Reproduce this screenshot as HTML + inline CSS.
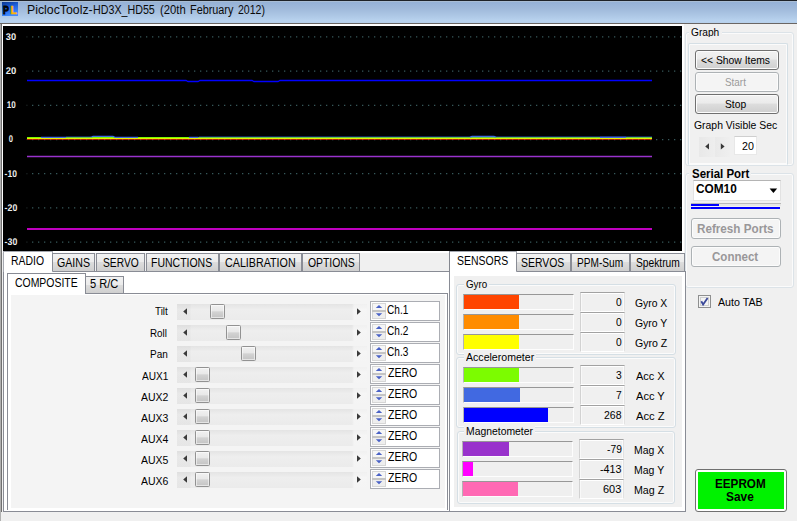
<!DOCTYPE html>
<html><head><meta charset="utf-8"><title>PiclocToolz-HD3X_HD55</title>
<style>
*{box-sizing:border-box;margin:0;padding:0}
html,body{width:797px;height:521px;overflow:hidden;background:#f0f0f0}
body{position:relative;font-family:"Liberation Sans",sans-serif;font-size:11px;color:#000;line-height:1}
.a{position:absolute}
.t{position:absolute;white-space:nowrap;line-height:14px;height:14px;transform-origin:0 0;display:block}
.btn{position:absolute;border:1px solid #707070;border-radius:3px;background:linear-gradient(#f2f2f2 0%,#ebebeb 45%,#dddddd 50%,#cfcfcf 100%);box-shadow:inset 0 0 0 1px #fcfcfc}
.btn.dis{border-color:#adb2b5;background:#f4f4f4}
.tab{position:absolute;border:1px solid #898c95;border-bottom:none;background:linear-gradient(#f2f2f2 0%,#ebebeb 50%,#dddddd 50%,#cfcfcf 100%)}
.tab.sel{background:#fff;border-color:#a5a8b0}
.trk{position:absolute;height:16px;background:linear-gradient(90deg,rgba(0,0,0,.025) 0,rgba(0,0,0,.025) 13px,rgba(0,0,0,0) 14px,rgba(255,255,255,0) 175px,rgba(255,255,255,.45) 177px),linear-gradient(#e4e4e4,#eeeeee 35%,#ebebeb)}
.thumb{position:absolute;width:15px;height:15px;border:1px solid #929292;border-radius:1.5px;background:linear-gradient(#f1f1f1 0%,#e8e8e8 46%,#d3d3d3 52%,#c4c4c4 100%);box-shadow:inset 0 0 0 1px rgba(255,255,255,.55)}
.box{position:absolute;border:1px solid #abadb3;background:#fff}
.val{position:absolute;width:45px;height:20px;border:1px solid #e2e2e2;border-top-color:#a2a2a2;border-left-color:#d2d2d2;border-bottom-color:#fff;background:#f0f0f0;box-shadow:inset 0 1px 0 #fff,inset 1px 0 0 #f8f8f8,inset -1px 0 0 #fafafa}
.gb{position:absolute;border:1px solid #d5dfe5;border-radius:3px;box-shadow:inset 0 0 0 1px #fbfbfb}
.bar{position:absolute;height:16px;border-top:1px solid #979797;border-left:1px solid #b4b4b4;border-bottom:1px solid #fdfdfd;border-right:1px solid #fdfdfd;background:#efefef}
.fill{position:absolute;left:0;top:0;height:14px}
</style></head><body>

<div class="a" style="left:0;top:0;width:797px;height:23px;background:linear-gradient(#a9bdd5 0,#a9bdd5 1px,#96b2d7 1.5px,#a0badb 8px,#aec8e6 15px,#b9d3ef 20px,#b6cfea 22px);border-top:1px solid #1e2228"></div>
<div class="a" style="left:0;top:23px;width:797px;height:1px;background:#6a6664"></div>
<svg class="a" style="left:2px;top:2px" width="16" height="14" viewBox="0 0 16 14"><defs><linearGradient id="ig" x1="0" y1="0" x2="0.35" y2="1"><stop offset="0" stop-color="#0a3590"/><stop offset="0.45" stop-color="#1b5fd8"/><stop offset="1" stop-color="#3f8aff"/></linearGradient></defs><rect width="16" height="14" fill="url(#ig)"/><text x="0" y="11.8" transform="translate(1.1 0) scale(0.84 1)" font-family="Liberation Sans,sans-serif" font-weight="bold" font-size="10.5" fill="#050505" stroke="#050505" stroke-width="0.8">P</text><text x="8.4" y="11.8" font-family="Liberation Sans,sans-serif" font-weight="bold" font-size="10.5" fill="#ffb400" stroke="#ffb400" stroke-width="0.5">L</text></svg>
<span class="t" style="left:26.60px;top:3.44px;font-size:12.3px;transform:scaleX(1.0013);color:#0a0a0a;">PiclocToolz-</span>
<span class="t" style="left:93.40px;top:3.44px;font-size:12.3px;transform:scaleX(0.8691);color:#0a0a0a;">HD3X_HD55</span>
<span class="t" style="left:160.30px;top:3.44px;font-size:12.3px;transform:scaleX(0.9172);color:#0a0a0a;">(20th</span>
<span class="t" style="left:190.10px;top:3.44px;font-size:12.3px;transform:scaleX(0.8821);color:#0a0a0a;">February</span>
<span class="t" style="left:238.20px;top:3.44px;font-size:12.3px;transform:scaleX(0.8555);color:#0a0a0a;">2012)</span>
<div class="a" style="left:0;top:24px;width:797px;height:497px;background:#f0f0f0"></div>
<div class="a" style="left:0;top:24px;width:1px;height:497px;background:#b0b0b0"></div>
<div class="a" style="left:1px;top:24px;width:1px;height:488px;background:#707070"></div>
<div class="a" style="left:2px;top:24px;width:682px;height:229px;background:#fff"></div>
<svg class="a" style="left:3px;top:26px" width="679" height="225" viewBox="3 26 679 225">
<rect x="3" y="26" width="679" height="225" fill="#000"/>
<line x1="32" y1="36.9" x2="682" y2="36.9" stroke="#37585a" stroke-width="1.25" stroke-dasharray="1.3 4.7"/>
<rect x="26.3" y="36.3" width="1.2" height="1.2" fill="#1e2626"/>
<line x1="32" y1="71.1" x2="682" y2="71.1" stroke="#37585a" stroke-width="1.25" stroke-dasharray="1.3 4.7"/>
<rect x="26.3" y="70.5" width="1.2" height="1.2" fill="#1e2626"/>
<line x1="32" y1="105.3" x2="682" y2="105.3" stroke="#37585a" stroke-width="1.25" stroke-dasharray="1.3 4.7"/>
<rect x="26.3" y="104.7" width="1.2" height="1.2" fill="#1e2626"/>
<line x1="32" y1="139.5" x2="682" y2="139.5" stroke="#37585a" stroke-width="1.25" stroke-dasharray="1.3 4.7"/>
<rect x="26.3" y="138.9" width="1.2" height="1.2" fill="#1e2626"/>
<line x1="32" y1="173.7" x2="682" y2="173.7" stroke="#37585a" stroke-width="1.25" stroke-dasharray="1.3 4.7"/>
<rect x="26.3" y="173.1" width="1.2" height="1.2" fill="#1e2626"/>
<line x1="32" y1="207.9" x2="682" y2="207.9" stroke="#37585a" stroke-width="1.25" stroke-dasharray="1.3 4.7"/>
<rect x="26.3" y="207.3" width="1.2" height="1.2" fill="#1e2626"/>
<line x1="32" y1="242.1" x2="682" y2="242.1" stroke="#37585a" stroke-width="1.25" stroke-dasharray="1.3 4.7"/>
<rect x="26.3" y="241.5" width="1.2" height="1.2" fill="#1e2626"/>
<text transform="translate(5.80 39.85) scale(0.954 1)" font-family="Liberation Sans,sans-serif" text-rendering="geometricPrecision" font-weight="bold" font-size="9.7" fill="#ececec">30</text>
<text transform="translate(5.80 74.02) scale(0.973 1)" font-family="Liberation Sans,sans-serif" text-rendering="geometricPrecision" font-weight="bold" font-size="9.7" fill="#ececec">20</text>
<text transform="translate(6.80 108.19) scale(0.834 1)" font-family="Liberation Sans,sans-serif" text-rendering="geometricPrecision" font-weight="bold" font-size="9.7" fill="#ececec">10</text>
<text transform="translate(8.80 142.36) scale(0.778 1)" font-family="Liberation Sans,sans-serif" text-rendering="geometricPrecision" font-weight="bold" font-size="9.7" fill="#ececec">0</text>
<text transform="translate(4.60 176.53) scale(0.876 1)" font-family="Liberation Sans,sans-serif" text-rendering="geometricPrecision" font-weight="bold" font-size="9.7" fill="#ececec">-10</text>
<text transform="translate(4.60 210.70) scale(0.905 1)" font-family="Liberation Sans,sans-serif" text-rendering="geometricPrecision" font-weight="bold" font-size="9.7" fill="#ececec">-20</text>
<text transform="translate(4.60 244.87) scale(0.905 1)" font-family="Liberation Sans,sans-serif" text-rendering="geometricPrecision" font-weight="bold" font-size="9.7" fill="#ececec">-30</text>
<path d="M27 80.5H186l2 1h10l2-1H252l2 1h24l2-1H652" fill="none" stroke="#0000ff" stroke-width="1.3"/>
<path d="M27 139.4H652" fill="none" stroke="#e83000" stroke-width="0.8"/>
<path d="M27 138.5H652" fill="none" stroke="#e6f400" stroke-width="1"/>
<path d="M27 137.5H652" fill="none" stroke="#78fa00" stroke-width="1"/>
<path d="M66 136.95H91M199 136.95H652" fill="none" stroke="#3c62e6" stroke-width="0.7"/>
<path d="M41 137.3H66M91 137.3l2-1h20l2 1M114 137.3H138M189 137.3H198.5M470 137.3l2-1h22l2 1M600 137.3H626" fill="none" stroke="#4169e1" stroke-width="1.2"/>
<path d="M27 156.5H652" fill="none" stroke="#9932cc" stroke-width="1.4"/>
<path d="M27 229H652" fill="none" stroke="#ff00ff" stroke-width="1.3"/>
</svg>
<div class="gb" style="left:685px;top:32px;width:109px;height:134px;border-color:#dce3e8"></div>
<div class="a" style="left:689px;top:26px;width:33px;height:11px;background:#f0f0f0;overflow:hidden">
<span class="t" style="left:1.90px;top:-1.12px;font-size:11.6px;transform:scaleX(0.8751);">Graph</span>
</div>
<div class="gb" style="left:688px;top:43px;width:100px;height:122px;border-bottom-color:transparent;border-radius:2px 2px 0 0"></div>
<div class="btn " style="left:695px;top:50px;width:84px;height:20px"></div>
<span class="t" style="left:701.40px;top:52.98px;font-size:11.6px;transform:scaleX(0.8920);">&lt;&lt; Show Items</span>
<div class="btn dis" style="left:695px;top:72px;width:84px;height:20px"></div>
<span class="t" style="left:725.30px;top:74.88px;font-size:11.6px;transform:scaleX(0.8529);color:#9a9a9a;">Start</span>
<div class="btn " style="left:695px;top:94px;width:84px;height:20px"></div>
<span class="t" style="left:725.30px;top:96.68px;font-size:11.6px;transform:scaleX(0.8846);">Stop</span>
<span class="t" style="left:693.60px;top:117.78px;font-size:11.6px;transform:scaleX(0.8983);">Graph Visible Sec</span>
<div class="a" style="left:699px;top:137px;width:31px;height:20px;background:linear-gradient(90deg,#e8e8e8,#eeeeee 50%,#e9e9e9 50%,#efefef)"></div>
<svg class="a" style="left:699px;top:137px" width="31" height="19"><path d="M10 6.2v6.4l-3.8-3.2zM21.8 6.2v6.4l3.8-3.2z" fill="#383838"/></svg>
<div class="box" style="left:734px;top:136px;width:23px;height:19px;border-color:#e8e8e8;border-top-color:#cfcfcf"></div>
<span class="t" style="left:741.80px;top:138.88px;font-size:11.6px;transform:scaleX(0.9221);">20</span>
<div class="gb" style="left:685px;top:173px;width:109px;height:115px;border-color:#dce3e8"></div>
<div class="a" style="left:689px;top:166px;width:62px;height:14px;background:#f0f0f0"></div>
<span class="t" style="left:691.60px;top:166.87px;font-size:12.5px;transform:scaleX(0.9178);font-weight:bold;">Serial Port</span>
<div class="box" style="left:693px;top:180px;width:88px;height:21px;border-color:#e2e2e2;border-top-color:#b4b4b4"></div>
<span class="t" style="left:696.20px;top:182.33px;font-size:12.6px;transform:scaleX(0.9394);font-weight:bold;">COM10</span>
<svg class="a" style="left:769px;top:188px" width="9" height="6"><path d="M0.6 0.6h7.6l-3.8 4.4z" fill="#000"/></svg>
<div class="a" style="left:691px;top:203px;width:90px;height:3px;background:#e6e6e6;border-top:1px solid #b8b8b8"></div>
<div class="a" style="left:691px;top:204px;width:28px;height:2px;background:#0000ff"></div>
<div class="a" style="left:691px;top:207px;width:89px;height:2px;background:#0000ff"></div>
<div class="btn dis" style="left:691px;top:218px;width:90px;height:21px"></div>
<span class="t" style="left:697.40px;top:221.64px;font-size:12.3px;transform:scaleX(0.9499);font-weight:bold;color:#999799;">Refresh Ports</span>
<div class="btn dis" style="left:691px;top:246px;width:90px;height:21px"></div>
<span class="t" style="left:711.80px;top:249.64px;font-size:12.3px;transform:scaleX(0.9390);font-weight:bold;color:#999799;">Connect</span>
<div class="a" style="left:698px;top:295px;width:13px;height:13px;border:1px solid #8e8f8f;background:#f4f4f4;box-shadow:inset 0 0 0 1px #f4f4f4, inset 0 0 0 2px #cfd0d0"></div>
<svg class="a" style="left:698px;top:295px" width="13" height="13"><path d="M3.3 6.3l1.8 3.2L9.6 3" fill="none" stroke="#3c4a9a" stroke-width="1.8"/></svg>
<span class="t" style="left:717.50px;top:294.58px;font-size:11.6px;transform:scaleX(0.9202);">Auto TAB</span>
<div class="a" style="left:695px;top:469px;width:92px;height:43px;border:1px solid #707070;border-radius:3px;background:#fff;"></div>
<div class="a" style="left:698px;top:472px;width:86px;height:37px;background:#00f200"></div>
<span class="t" style="left:714.90px;top:476.74px;font-size:12px;transform:scaleX(0.9748);font-weight:bold;">EEPROM</span>
<span class="t" style="left:725.60px;top:489.54px;font-size:12px;transform:scaleX(0.9924);font-weight:bold;">Save</span>
<div class="a" style="left:3px;top:271px;width:447px;height:241px;border:1px solid #898c95;background:#fff"></div>
<div class="tab sel" style="left:3px;top:251px;width:50px;height:21px"></div>
<span class="t" style="left:11.40px;top:253.84px;font-size:12.3px;transform:scaleX(0.8475);">RADIO</span>
<div class="tab" style="left:52px;top:253px;width:43px;height:18px"></div>
<span class="t" style="left:56.60px;top:255.54px;font-size:12.3px;transform:scaleX(0.8620);">GAINS</span>
<div class="tab" style="left:96px;top:253px;width:49px;height:18px"></div>
<span class="t" style="left:102.50px;top:255.54px;font-size:12.3px;transform:scaleX(0.8330);">SERVO</span>
<div class="tab" style="left:146px;top:253px;width:73px;height:18px"></div>
<span class="t" style="left:151.30px;top:255.54px;font-size:12.3px;transform:scaleX(0.8528);">FUNCTIONS</span>
<div class="tab" style="left:219px;top:253px;width:83px;height:18px"></div>
<span class="t" style="left:224.60px;top:255.54px;font-size:12.3px;transform:scaleX(0.8717);">CALIBRATION</span>
<div class="tab" style="left:302px;top:253px;width:58px;height:18px"></div>
<span class="t" style="left:308.20px;top:255.54px;font-size:12.3px;transform:scaleX(0.8455);">OPTIONS</span>
<div class="a" style="left:7px;top:293px;width:441px;height:217px;border:1px solid #898c95;border-bottom:none;background:#fff"></div>
<div class="a" style="left:11px;top:295px;width:434px;height:213px;background:#f4f4f4"></div>
<div class="tab sel" style="left:7px;top:273px;width:79px;height:21px;border-color:#898c95"></div>
<span class="t" style="left:14.90px;top:276.04px;font-size:12.3px;transform:scaleX(0.8496);">COMPOSITE</span>
<div class="tab" style="left:85px;top:276px;width:39px;height:17px"></div>
<span class="t" style="left:90.20px;top:277.34px;font-size:12.3px;transform:scaleX(0.9033);">5 R/C</span>
<span class="t" style="left:154.70px;top:304.48px;font-size:11.6px;transform:scaleX(0.8509);">Tilt</span>
<div class="trk" style="left:177px;top:304px;width:190px"></div>
<svg class="a" style="left:177px;top:304px" width="190" height="16"><path d="M10 4.3v6.4l-3.8-3.2zM180 4.3v6.4l3.8-3.2z" fill="#3a3a3a"/></svg>
<div class="thumb" style="left:210px;top:304px"></div>
<div class="box" style="left:370px;top:301px;width:70px;height:20px"></div>
<svg class="a" style="left:372px;top:303px" width="14" height="16"><rect x="0" y="0" width="14" height="16" fill="#f3f3f3"/><rect x="0.5" y="0.5" width="13" height="7" fill="#f6f6f6" stroke="#d6d6d6"/><rect x="0.5" y="8.5" width="13" height="7" fill="#eeeeee" stroke="#d6d6d6"/><rect x="0" y="7.3" width="14" height="1.4" fill="#bdbdbd"/><path d="M3.8 5l3.2-3 3.2 3zM3.8 10.2l3.2 3 3.2-3z" fill="#4a62c6"/></svg>
<span class="t" style="left:387.40px;top:302.61px;font-size:12.1px;transform:scaleX(0.8333);">Ch.1</span>
<span class="t" style="left:150.40px;top:326.48px;font-size:11.6px;transform:scaleX(0.8461);">Roll</span>
<div class="trk" style="left:177px;top:325px;width:190px"></div>
<svg class="a" style="left:177px;top:325px" width="190" height="16"><path d="M10 4.3v6.4l-3.8-3.2zM180 4.3v6.4l3.8-3.2z" fill="#3a3a3a"/></svg>
<div class="thumb" style="left:226px;top:325px"></div>
<div class="box" style="left:370px;top:322px;width:70px;height:20px"></div>
<svg class="a" style="left:372px;top:324px" width="14" height="16"><rect x="0" y="0" width="14" height="16" fill="#f3f3f3"/><rect x="0.5" y="0.5" width="13" height="7" fill="#f6f6f6" stroke="#d6d6d6"/><rect x="0.5" y="8.5" width="13" height="7" fill="#eeeeee" stroke="#d6d6d6"/><rect x="0" y="7.3" width="14" height="1.4" fill="#bdbdbd"/><path d="M3.8 5l3.2-3 3.2 3zM3.8 10.2l3.2 3 3.2-3z" fill="#4a62c6"/></svg>
<span class="t" style="left:387.40px;top:323.61px;font-size:12.1px;transform:scaleX(0.8333);">Ch.2</span>
<span class="t" style="left:149.50px;top:347.38px;font-size:11.6px;transform:scaleX(0.8630);">Pan</span>
<div class="trk" style="left:177px;top:346px;width:190px"></div>
<svg class="a" style="left:177px;top:346px" width="190" height="16"><path d="M10 4.3v6.4l-3.8-3.2zM180 4.3v6.4l3.8-3.2z" fill="#3a3a3a"/></svg>
<div class="thumb" style="left:241px;top:346px"></div>
<div class="box" style="left:370px;top:343px;width:70px;height:20px"></div>
<svg class="a" style="left:372px;top:345px" width="14" height="16"><rect x="0" y="0" width="14" height="16" fill="#f3f3f3"/><rect x="0.5" y="0.5" width="13" height="7" fill="#f6f6f6" stroke="#d6d6d6"/><rect x="0.5" y="8.5" width="13" height="7" fill="#eeeeee" stroke="#d6d6d6"/><rect x="0" y="7.3" width="14" height="1.4" fill="#bdbdbd"/><path d="M3.8 5l3.2-3 3.2 3zM3.8 10.2l3.2 3 3.2-3z" fill="#4a62c6"/></svg>
<span class="t" style="left:387.40px;top:344.61px;font-size:12.1px;transform:scaleX(0.8333);">Ch.3</span>
<span class="t" style="left:142.30px;top:369.18px;font-size:11.6px;transform:scaleX(0.8678);">AUX1</span>
<div class="trk" style="left:177px;top:367px;width:190px"></div>
<svg class="a" style="left:177px;top:367px" width="190" height="16"><path d="M10 4.3v6.4l-3.8-3.2zM180 4.3v6.4l3.8-3.2z" fill="#3a3a3a"/></svg>
<div class="thumb" style="left:195px;top:367px"></div>
<div class="box" style="left:370px;top:364px;width:70px;height:20px"></div>
<svg class="a" style="left:372px;top:366px" width="14" height="16"><rect x="0" y="0" width="14" height="16" fill="#f3f3f3"/><rect x="0.5" y="0.5" width="13" height="7" fill="#f6f6f6" stroke="#d6d6d6"/><rect x="0.5" y="8.5" width="13" height="7" fill="#eeeeee" stroke="#d6d6d6"/><rect x="0" y="7.3" width="14" height="1.4" fill="#bdbdbd"/><path d="M3.8 5l3.2-3 3.2 3zM3.8 10.2l3.2 3 3.2-3z" fill="#4a62c6"/></svg>
<span class="t" style="left:388.00px;top:365.51px;font-size:12.1px;transform:scaleX(0.8687);">ZERO</span>
<span class="t" style="left:140.60px;top:390.48px;font-size:11.6px;transform:scaleX(0.9041);">AUX2</span>
<div class="trk" style="left:177px;top:388px;width:190px"></div>
<svg class="a" style="left:177px;top:388px" width="190" height="16"><path d="M10 4.3v6.4l-3.8-3.2zM180 4.3v6.4l3.8-3.2z" fill="#3a3a3a"/></svg>
<div class="thumb" style="left:195px;top:388px"></div>
<div class="box" style="left:370px;top:385px;width:70px;height:20px"></div>
<svg class="a" style="left:372px;top:387px" width="14" height="16"><rect x="0" y="0" width="14" height="16" fill="#f3f3f3"/><rect x="0.5" y="0.5" width="13" height="7" fill="#f6f6f6" stroke="#d6d6d6"/><rect x="0.5" y="8.5" width="13" height="7" fill="#eeeeee" stroke="#d6d6d6"/><rect x="0" y="7.3" width="14" height="1.4" fill="#bdbdbd"/><path d="M3.8 5l3.2-3 3.2 3zM3.8 10.2l3.2 3 3.2-3z" fill="#4a62c6"/></svg>
<span class="t" style="left:388.00px;top:386.51px;font-size:12.1px;transform:scaleX(0.8687);">ZERO</span>
<span class="t" style="left:140.60px;top:411.28px;font-size:11.6px;transform:scaleX(0.9041);">AUX3</span>
<div class="trk" style="left:177px;top:409px;width:190px"></div>
<svg class="a" style="left:177px;top:409px" width="190" height="16"><path d="M10 4.3v6.4l-3.8-3.2zM180 4.3v6.4l3.8-3.2z" fill="#3a3a3a"/></svg>
<div class="thumb" style="left:195px;top:409px"></div>
<div class="box" style="left:370px;top:406px;width:70px;height:20px"></div>
<svg class="a" style="left:372px;top:408px" width="14" height="16"><rect x="0" y="0" width="14" height="16" fill="#f3f3f3"/><rect x="0.5" y="0.5" width="13" height="7" fill="#f6f6f6" stroke="#d6d6d6"/><rect x="0.5" y="8.5" width="13" height="7" fill="#eeeeee" stroke="#d6d6d6"/><rect x="0" y="7.3" width="14" height="1.4" fill="#bdbdbd"/><path d="M3.8 5l3.2-3 3.2 3zM3.8 10.2l3.2 3 3.2-3z" fill="#4a62c6"/></svg>
<span class="t" style="left:388.00px;top:407.51px;font-size:12.1px;transform:scaleX(0.8687);">ZERO</span>
<span class="t" style="left:140.60px;top:432.08px;font-size:11.6px;transform:scaleX(0.9041);">AUX4</span>
<div class="trk" style="left:177px;top:430px;width:190px"></div>
<svg class="a" style="left:177px;top:430px" width="190" height="16"><path d="M10 4.3v6.4l-3.8-3.2zM180 4.3v6.4l3.8-3.2z" fill="#3a3a3a"/></svg>
<div class="thumb" style="left:195px;top:430px"></div>
<div class="box" style="left:370px;top:427px;width:70px;height:20px"></div>
<svg class="a" style="left:372px;top:429px" width="14" height="16"><rect x="0" y="0" width="14" height="16" fill="#f3f3f3"/><rect x="0.5" y="0.5" width="13" height="7" fill="#f6f6f6" stroke="#d6d6d6"/><rect x="0.5" y="8.5" width="13" height="7" fill="#eeeeee" stroke="#d6d6d6"/><rect x="0" y="7.3" width="14" height="1.4" fill="#bdbdbd"/><path d="M3.8 5l3.2-3 3.2 3zM3.8 10.2l3.2 3 3.2-3z" fill="#4a62c6"/></svg>
<span class="t" style="left:388.00px;top:428.51px;font-size:12.1px;transform:scaleX(0.8687);">ZERO</span>
<span class="t" style="left:140.60px;top:453.08px;font-size:11.6px;transform:scaleX(0.9041);">AUX5</span>
<div class="trk" style="left:177px;top:451px;width:190px"></div>
<svg class="a" style="left:177px;top:451px" width="190" height="16"><path d="M10 4.3v6.4l-3.8-3.2zM180 4.3v6.4l3.8-3.2z" fill="#3a3a3a"/></svg>
<div class="thumb" style="left:195px;top:451px"></div>
<div class="box" style="left:370px;top:448px;width:70px;height:20px"></div>
<svg class="a" style="left:372px;top:450px" width="14" height="16"><rect x="0" y="0" width="14" height="16" fill="#f3f3f3"/><rect x="0.5" y="0.5" width="13" height="7" fill="#f6f6f6" stroke="#d6d6d6"/><rect x="0.5" y="8.5" width="13" height="7" fill="#eeeeee" stroke="#d6d6d6"/><rect x="0" y="7.3" width="14" height="1.4" fill="#bdbdbd"/><path d="M3.8 5l3.2-3 3.2 3zM3.8 10.2l3.2 3 3.2-3z" fill="#4a62c6"/></svg>
<span class="t" style="left:388.00px;top:449.51px;font-size:12.1px;transform:scaleX(0.8687);">ZERO</span>
<span class="t" style="left:140.60px;top:473.88px;font-size:11.6px;transform:scaleX(0.9041);">AUX6</span>
<div class="trk" style="left:177px;top:472px;width:190px"></div>
<svg class="a" style="left:177px;top:472px" width="190" height="16"><path d="M10 4.3v6.4l-3.8-3.2zM180 4.3v6.4l3.8-3.2z" fill="#3a3a3a"/></svg>
<div class="thumb" style="left:195px;top:472px"></div>
<div class="box" style="left:370px;top:469px;width:70px;height:20px"></div>
<svg class="a" style="left:372px;top:471px" width="14" height="16"><rect x="0" y="0" width="14" height="16" fill="#f3f3f3"/><rect x="0.5" y="0.5" width="13" height="7" fill="#f6f6f6" stroke="#d6d6d6"/><rect x="0.5" y="8.5" width="13" height="7" fill="#eeeeee" stroke="#d6d6d6"/><rect x="0" y="7.3" width="14" height="1.4" fill="#bdbdbd"/><path d="M3.8 5l3.2-3 3.2 3zM3.8 10.2l3.2 3 3.2-3z" fill="#4a62c6"/></svg>
<span class="t" style="left:388.00px;top:470.51px;font-size:12.1px;transform:scaleX(0.8687);">ZERO</span>
<div class="a" style="left:449px;top:271px;width:237px;height:241px;border:1px solid #898c95;background:#fff"></div>
<div class="a" style="left:454px;top:276px;width:228px;height:231px;background:#f0f0f0"></div>
<div class="tab sel" style="left:449px;top:251px;width:68px;height:21px"></div>
<div class="a" style="left:449px;top:251px;width:1px;height:21px;background:#84878f"></div>
<span class="t" style="left:457.10px;top:253.84px;font-size:12.3px;transform:scaleX(0.8511);">SENSORS</span>
<div class="tab" style="left:516px;top:253px;width:55px;height:18px"></div>
<span class="t" style="left:521.40px;top:255.54px;font-size:12.3px;transform:scaleX(0.8483);">SERVOS</span>
<div class="tab" style="left:571px;top:253px;width:59px;height:18px"></div>
<span class="t" style="left:577.40px;top:255.54px;font-size:12.3px;transform:scaleX(0.8226);">PPM-Sum</span>
<div class="tab" style="left:630px;top:253px;width:55px;height:18px"></div>
<span class="t" style="left:636.40px;top:255.54px;font-size:12.3px;transform:scaleX(0.8324);">Spektrum</span>
<div class="gb" style="left:456px;top:284px;width:220px;height:71px"></div>
<div class="a" style="left:464px;top:279px;width:25px;height:12px;background:#f0f0f0"></div>
<span class="t" style="left:465.90px;top:277.38px;font-size:11.6px;transform:scaleX(0.8439);">Gyro</span>
<div class="bar" style="left:463px;top:294px;width:111px"><div class="fill" style="width:55px;background:#ff4500"></div></div>
<div class="val" style="left:580px;top:292px"></div>
<span class="t" style="left:616.10px;top:294.88px;font-size:11.6px;transform:scaleX(0.8834);">0</span>
<span class="t" style="left:634.70px;top:295.88px;font-size:11.6px;transform:scaleX(0.8946);">Gyro X</span>
<div class="bar" style="left:463px;top:314px;width:111px"><div class="fill" style="width:55px;background:#ff8c00"></div></div>
<div class="val" style="left:580px;top:312px"></div>
<span class="t" style="left:616.10px;top:314.88px;font-size:11.6px;transform:scaleX(0.8834);">0</span>
<span class="t" style="left:634.70px;top:315.88px;font-size:11.6px;transform:scaleX(0.9000);">Gyro Y</span>
<div class="bar" style="left:463px;top:334px;width:111px"><div class="fill" style="width:55px;background:#ffff00"></div></div>
<div class="val" style="left:580px;top:332px"></div>
<span class="t" style="left:616.10px;top:334.88px;font-size:11.6px;transform:scaleX(0.8834);">0</span>
<span class="t" style="left:634.70px;top:335.88px;font-size:11.6px;transform:scaleX(0.9111);">Gyro Z</span>
<div class="gb" style="left:456px;top:357px;width:220px;height:71px"></div>
<div class="a" style="left:464px;top:352px;width:72px;height:12px;background:#f0f0f0"></div>
<span class="t" style="left:465.80px;top:350.38px;font-size:11.6px;transform:scaleX(0.9120);">Accelerometer</span>
<div class="bar" style="left:463px;top:367px;width:111px"><div class="fill" style="width:55px;background:#7cfc00"></div></div>
<div class="val" style="left:580px;top:365px"></div>
<span class="t" style="left:616.10px;top:367.88px;font-size:11.6px;transform:scaleX(0.8834);">3</span>
<span class="t" style="left:635.60px;top:368.88px;font-size:11.6px;transform:scaleX(0.9470);">Acc X</span>
<div class="bar" style="left:463px;top:387px;width:111px"><div class="fill" style="width:56px;background:#4169e1"></div></div>
<div class="val" style="left:580px;top:385px"></div>
<span class="t" style="left:616.10px;top:387.88px;font-size:11.6px;transform:scaleX(0.8834);">7</span>
<span class="t" style="left:635.60px;top:388.88px;font-size:11.6px;transform:scaleX(0.9539);">Acc Y</span>
<div class="bar" style="left:463px;top:407px;width:111px"><div class="fill" style="width:84px;background:#0000ff"></div></div>
<div class="val" style="left:580px;top:405px"></div>
<span class="t" style="left:604.30px;top:407.88px;font-size:11.6px;transform:scaleX(0.9040);">268</span>
<span class="t" style="left:635.60px;top:408.88px;font-size:11.6px;transform:scaleX(0.9679);">Acc Z</span>
<div class="gb" style="left:457px;top:431px;width:218px;height:73px"></div>
<div class="a" style="left:464px;top:426px;width:71px;height:12px;background:#f0f0f0"></div>
<span class="t" style="left:465.60px;top:424.38px;font-size:11.6px;transform:scaleX(0.8959);">Magnetometer</span>
<div class="bar" style="left:462px;top:441px;width:111px"><div class="fill" style="width:46px;background:#9932cc"></div></div>
<div class="val" style="left:579px;top:439px"></div>
<span class="t" style="left:606.50px;top:441.88px;font-size:11.6px;transform:scaleX(0.8878);">-79</span>
<span class="t" style="left:633.80px;top:442.88px;font-size:11.6px;transform:scaleX(0.9007);">Mag X</span>
<div class="bar" style="left:462px;top:461px;width:111px"><div class="fill" style="width:10px;background:#ff00ff"></div></div>
<div class="val" style="left:579px;top:459px"></div>
<span class="t" style="left:599.90px;top:461.88px;font-size:11.6px;transform:scaleX(0.9267);">-413</span>
<span class="t" style="left:633.80px;top:462.88px;font-size:11.6px;transform:scaleX(0.9065);">Mag Y</span>
<div class="bar" style="left:462px;top:481px;width:111px"><div class="fill" style="width:55px;background:#ff69b4"></div></div>
<div class="val" style="left:579px;top:479px"></div>
<span class="t" style="left:603.10px;top:481.88px;font-size:11.6px;transform:scaleX(0.9454);">603</span>
<span class="t" style="left:633.80px;top:482.88px;font-size:11.6px;transform:scaleX(0.9185);">Mag Z</span>
</body></html>
